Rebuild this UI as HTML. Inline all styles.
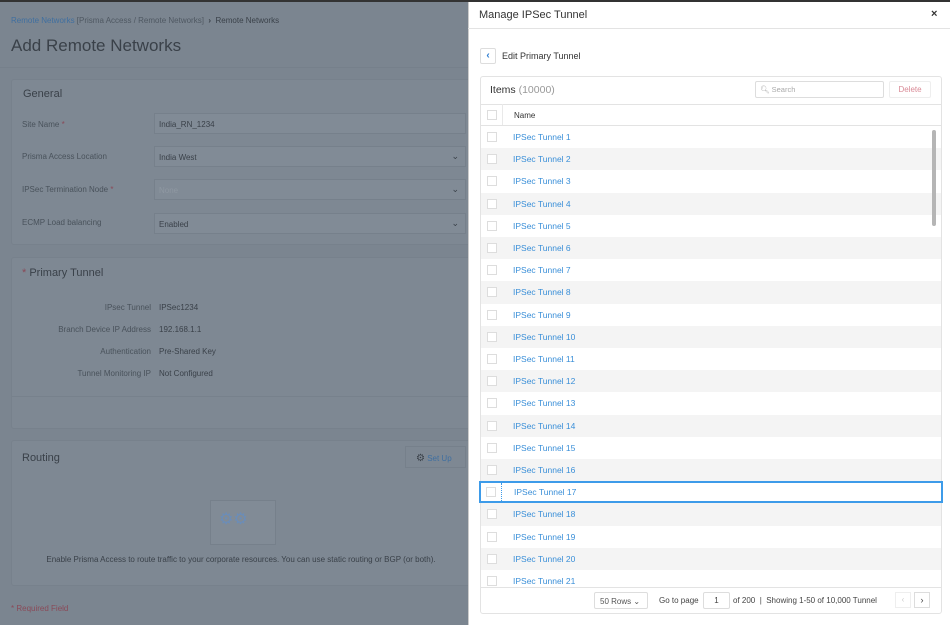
<!DOCTYPE html>
<html><head><meta charset="utf-8"><style>
*{box-sizing:border-box;margin:0;padding:0}
body{width:950px;height:625px;overflow:hidden;position:relative;font-family:"Liberation Sans",sans-serif;background:#7b8590;color:#3a4149}
.a{position:absolute}
.card{position:absolute;left:11px;width:460px;border:1px solid #77818c;background:#7e8893;border-radius:3px}
.lbl{position:absolute;font-size:8px;color:#49525b}
.inp{position:absolute;left:154px;width:312px;height:21px;border:1px solid #76808b;background:#818b96;font-size:8px;padding:6px 4px;color:#3a4149}
.chev{position:absolute;right:6px;top:4px;font-size:9px;color:#3a4149}
.val{position:absolute;left:159px;font-size:8px;color:#3a4149}
.rl{position:absolute;width:151px;text-align:right;font-size:8px;color:#49525b}
.row{position:absolute;left:481px;width:460px;height:22.2px;font-size:8.5px;color:#3a8fd8}
.row span{position:absolute;left:32px;top:6px}
.row i{position:absolute;left:6px;top:6px;width:10px;height:10px;border:1px solid #ddd;background:#fff}
.g{background:#f4f4f4}
</style></head><body>
<div class="a" style="left:0;top:0;width:950px;height:2px;background:#333"></div>
<div class="a" style="left:11px;top:16px;font-size:8px;color:#4f5862"><span style="color:#3f6fa0">Remote Networks</span> [Prisma Access / Remote Networks] &nbsp;<b style="color:#3a4149">›</b>&nbsp; <span style="color:#3a4149">Remote Networks</span></div>
<div class="a" style="left:11px;top:36px;font-size:17px;color:#3a4149">Add Remote Networks</div>
<div class="a" style="left:0;top:67px;width:468px;height:1px;background:#76808b"></div>

<div class="card" style="top:79px;height:166px">
<div class="a" style="left:11px;top:8px;font-size:11px">General</div>
</div>
<div class="lbl" style="left:22px;top:120px">Site Name <span style="color:#8a4a58">*</span></div>
<div class="inp" style="top:113px">India_RN_1234</div>
<div class="lbl" style="left:22px;top:152px">Prisma Access Location</div>
<div class="inp" style="top:146px">India West<span class="chev">⌄</span></div>
<div class="lbl" style="left:22px;top:185px">IPSec Termination Node <span style="color:#8a4a58">*</span></div>
<div class="inp" style="top:179px;color:#8f98a2">None<span class="chev">⌄</span></div>
<div class="lbl" style="left:22px;top:218px">ECMP Load balancing</div>
<div class="inp" style="top:213px">Enabled<span class="chev">⌄</span></div>

<div class="card" style="top:257px;height:172px">
<div class="a" style="left:10px;top:9px;font-size:11px"><span style="color:#8a4a58">*</span> Primary Tunnel</div>
<div class="a" style="left:0;top:138px;width:458px;height:1px;background:#77818c"></div>
</div>
<div class="rl" style="left:0;top:303px">IPsec Tunnel</div><div class="val" style="top:303px">IPSec1234</div>
<div class="rl" style="left:0;top:325px">Branch Device IP Address</div><div class="val" style="top:325px">192.168.1.1</div>
<div class="rl" style="left:0;top:347px">Authentication</div><div class="val" style="top:347px">Pre-Shared Key</div>
<div class="rl" style="left:0;top:369px">Tunnel Monitoring IP</div><div class="val" style="top:369px">Not Configured</div>

<div class="card" style="top:440px;height:146px">
<div class="a" style="left:10px;top:11px;font-size:11px">Routing</div>
<div class="a" style="left:393px;top:5px;width:61px;height:22px;border:1px solid #76808b;font-size:8px;color:#3f6fa0;padding:6px 0 0 10px"><span style="color:#3a4149;font-size:10px">⚙</span> Set Up</div>
<div class="a" style="left:198px;top:59px;width:66px;height:45px;border:1px solid #76808b;background:#818b96;color:#6b8db8;font-size:16px;padding:8px 0 0 8px">⚙⚙</div>
<div class="a" style="left:0;top:114px;width:458px;text-align:center;font-size:8px;color:#3a4149">Enable Prisma Access to route traffic to your corporate resources. You can use static routing or BGP (or both).</div>
</div>
<div class="a" style="left:11px;top:604px;font-size:8px;color:#8a4a58">* Required Field</div>

<div class="a" style="left:468px;top:2px;width:482px;height:623px;background:#fff;border-left:1px solid #ccc"></div>
<div class="a" style="left:479px;top:9px;font-size:11px;color:#333">Manage IPSec Tunnel</div>
<div class="a" style="left:931px;top:8px;font-size:11px;color:#333;font-weight:bold">×</div>
<div class="a" style="left:468px;top:28px;width:482px;height:1px;background:#e3e3e3"></div>
<div class="a" style="left:480px;top:48px;width:16px;height:16px;border:1px solid #ddd;border-radius:2px;color:#2a7bd0;font-size:10px;text-align:center;line-height:14px;font-weight:bold">‹</div>
<div class="a" style="left:502px;top:51px;font-size:9px;color:#333">Edit Primary Tunnel</div>

<div class="a" style="left:480px;top:76px;width:462px;height:538px;border:1px solid #e3e3e3;border-radius:3px"></div>
<div class="a" style="left:490px;top:84px;font-size:10.5px;color:#333">Items <span style="color:#999">(10000)</span></div>
<div class="a" style="left:755px;top:81px;width:129px;height:17px;border:1px solid #ddd;border-radius:2px;font-size:7.5px;color:#aaa;padding:3px 0 0 4px">🔍︎ Search</div>
<div class="a" style="left:889px;top:81px;width:42px;height:17px;border:1px solid #eee;border-radius:2px;font-size:8px;color:#d98a96;text-align:center;line-height:16px">Delete</div>
<div class="a" style="left:481px;top:104px;width:460px;height:1px;background:#e3e3e3"></div>
<div class="a" style="left:481px;top:104px;width:460px;height:22px;font-size:8px;color:#333"><i style="position:absolute;left:6px;top:6px;width:10px;height:10px;border:1px solid #ddd"></i><span style="position:absolute;left:33px;top:7px">Name</span><b style="position:absolute;left:21px;top:0;width:1px;height:22px;background:#e9e9e9"></b></div>
<div class="a" style="left:481px;top:125px;width:460px;height:1px;background:#e3e3e3"></div>

<div class="row" style="top:126px"><i></i><span>IPSec Tunnel 1</span></div>
<div class="row g" style="top:148.2px"><i></i><span>IPSec Tunnel 2</span></div>
<div class="row" style="top:170.4px"><i></i><span>IPSec Tunnel 3</span></div>
<div class="row g" style="top:192.6px"><i></i><span>IPSec Tunnel 4</span></div>
<div class="row" style="top:214.8px"><i></i><span>IPSec Tunnel 5</span></div>
<div class="row g" style="top:237px"><i></i><span>IPSec Tunnel 6</span></div>
<div class="row" style="top:259.2px"><i></i><span>IPSec Tunnel 7</span></div>
<div class="row g" style="top:281.4px"><i></i><span>IPSec Tunnel 8</span></div>
<div class="row" style="top:303.6px"><i></i><span>IPSec Tunnel 9</span></div>
<div class="row g" style="top:325.8px"><i></i><span>IPSec Tunnel 10</span></div>
<div class="row" style="top:348px"><i></i><span>IPSec Tunnel 11</span></div>
<div class="row g" style="top:370.2px"><i></i><span>IPSec Tunnel 12</span></div>
<div class="row" style="top:392.4px"><i></i><span>IPSec Tunnel 13</span></div>
<div class="row g" style="top:414.6px"><i></i><span>IPSec Tunnel 14</span></div>
<div class="row" style="top:436.8px"><i></i><span>IPSec Tunnel 15</span></div>
<div class="row g" style="top:459px"><i></i><span>IPSec Tunnel 16</span></div>
<div class="row" style="top:481.2px;left:479px;width:464px;border:2px solid #3d9be9"><i style="left:5px;top:4px"></i><span style="left:33px;top:4px">IPSec Tunnel 17</span><b style="position:absolute;left:20px;top:0;height:18px;border-left:1px dotted #3d9be9"></b></div>
<div class="row g" style="top:503.4px"><i></i><span>IPSec Tunnel 18</span></div>
<div class="row" style="top:525.6px"><i></i><span>IPSec Tunnel 19</span></div>
<div class="row g" style="top:547.8px"><i></i><span>IPSec Tunnel 20</span></div>
<div class="row" style="top:570px;height:17px;overflow:hidden"><i></i><span>IPSec Tunnel 21</span></div>
<div class="a" style="left:932px;top:130px;width:4px;height:96px;background:#b5b5b5;border-radius:2px"></div>

<div class="a" style="left:481px;top:587px;width:460px;height:1px;background:#e3e3e3"></div>
<div class="a" style="left:594px;top:592px;width:54px;height:17px;border:1px solid #ddd;border-radius:2px;font-size:8px;color:#555;padding:4px 0 0 5px">50 Rows ⌄</div>
<div class="a" style="left:659px;top:596px;font-size:8px;color:#444">Go to page</div>
<div class="a" style="left:703px;top:592px;width:27px;height:17px;border:1px solid #ddd;border-radius:2px;font-size:8px;color:#444;text-align:center;line-height:15px">1</div>
<div class="a" style="left:733px;top:596px;font-size:8px;color:#444">of 200 &nbsp;| &nbsp;Showing 1-50 of 10,000 Tunnel</div>
<div class="a" style="left:895px;top:592px;width:16px;height:16px;border:1px solid #eee;font-size:8px;color:#ccc;text-align:center;line-height:14px">‹</div>
<div class="a" style="left:914px;top:592px;width:16px;height:16px;border:1px solid #ddd;font-size:9px;color:#444;text-align:center;line-height:14px">›</div>
</body></html>
